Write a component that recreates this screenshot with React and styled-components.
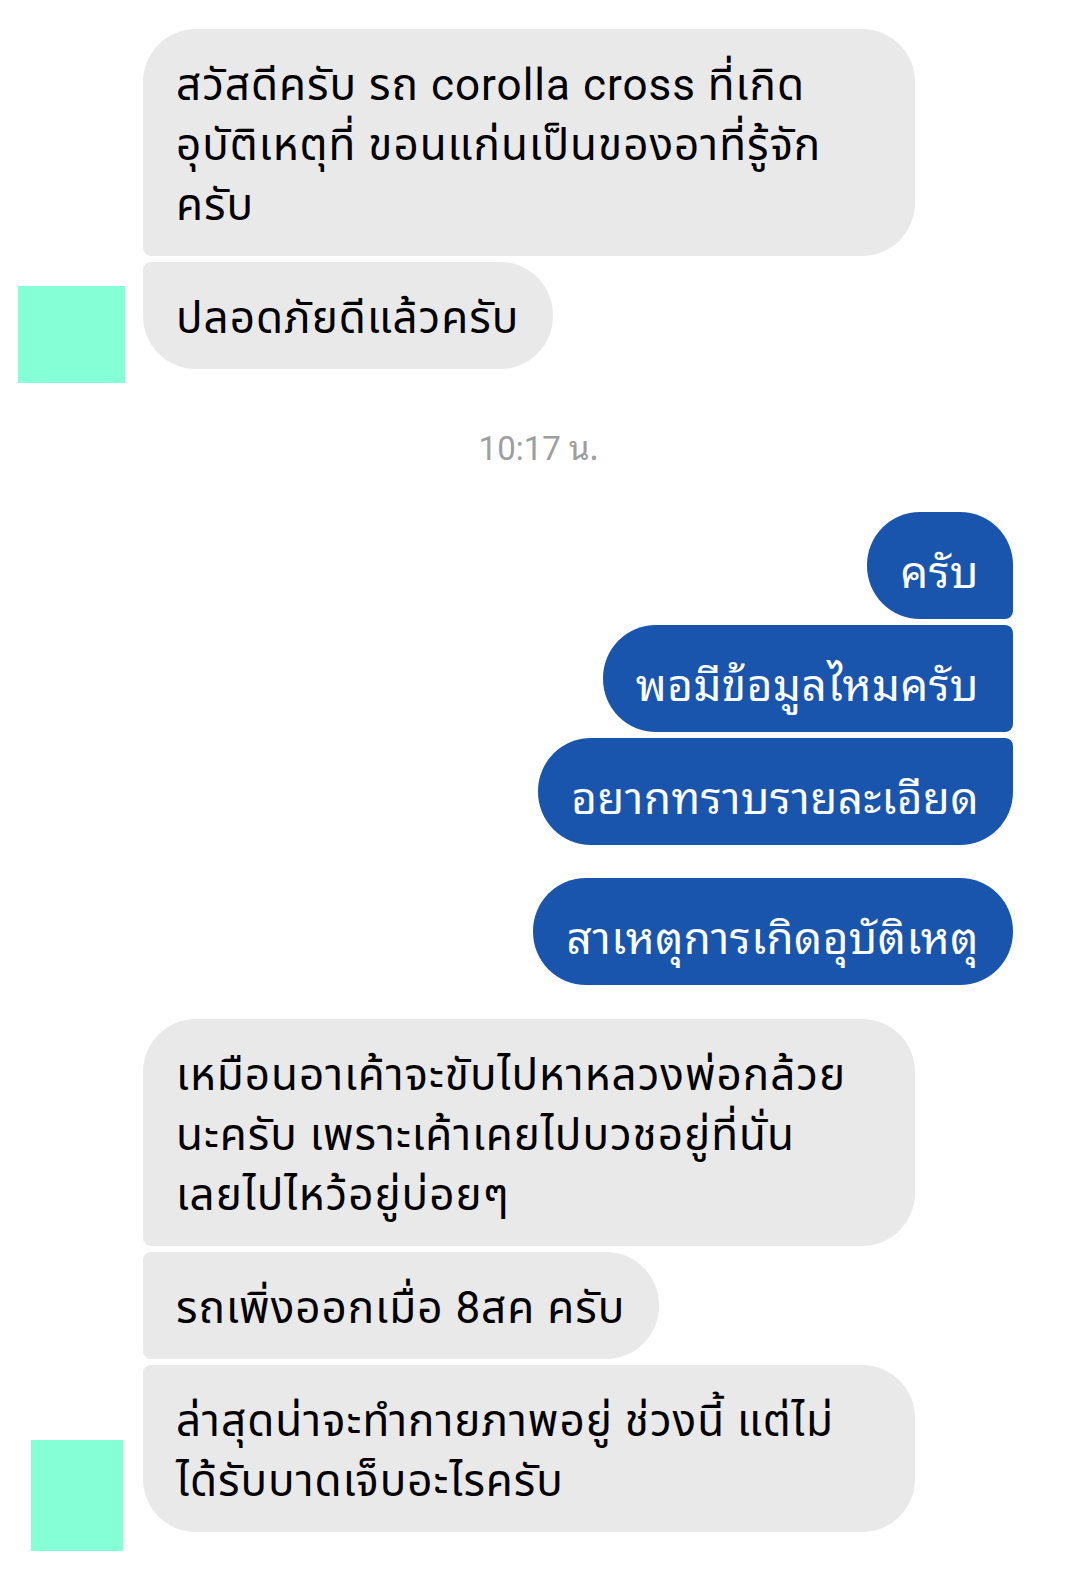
import React from "react";
import styled, { createGlobalStyle } from "styled-components";

const GlobalStyle = createGlobalStyle`
  body {
    margin: 0;
    background: #ffffff;
  }
`;

const BIG = 53;
const SMALL = 8;

const LOOPED =
  '"Noto Sans Thai Looped", "Noto Serif Thai", Loma, Garuda, Norasi, Laksaman, Sarabun, "Tlwg Typo", Roboto, sans-serif';

// radius per corner, depending on where the bubble sits in its group
function corners(pos) {
  if (pos === "single") return [BIG, BIG];
  if (pos === "first") return [BIG, SMALL];
  if (pos === "middle") return [SMALL, SMALL];
  return [SMALL, BIG];
}

function App() {
  return (
    <Thread>
      <GlobalStyle />

      <Group>
        <Row>
          <Side />
          <Bubble $pos="first" $wide>
            สวัสดีครับ รถ corolla cross ที่เกิด
            <br />
            อุบัติเหตุที่ ขอนแก่นเป็นของอาที่รู้จัก
            <br />
            ครับ
          </Bubble>
        </Row>
        <Row>
          <Side>
            <Avatar $left={18} $w={107} $h={97} $drop={14} />
          </Side>
          <Bubble $pos="last">ปลอดภัยดีแล้วครับ</Bubble>
        </Row>
      </Group>

      <Stamp>
        10:17 <ThaiUnit>น.</ThaiUnit>
      </Stamp>

      <Group $out>
        <Bubble $out $pos="first">ครับ</Bubble>
        <Bubble $out $pos="middle">พอมีข้อมูลไหมครับ</Bubble>
        <Bubble $out $pos="last">อยากทราบรายละเอียด</Bubble>
      </Group>

      <Group $out $space={33}>
        <Bubble $out $pos="single">สาเหตุการเกิดอุบัติเหตุ</Bubble>
      </Group>

      <Group $space={34}>
        <Row>
          <Side />
          <Bubble $pos="first" $wide>
            เหมือนอาเค้าจะขับไปหาหลวงพ่อกล้วย
            <br />
            นะครับ เพราะเค้าเคยไปบวชอยู่ที่นั่น
            <br />
            เลยไปไหว้อยู่บ่อยๆ
          </Bubble>
        </Row>
        <Row>
          <Side />
          <Bubble $pos="middle">รถเพิ่งออกเมื่อ 8สค ครับ</Bubble>
        </Row>
        <Row>
          <Side>
            <Avatar $left={31} $w={92} $h={111} $drop={19} />
          </Side>
          <Bubble $pos="last" $wide>
            ล่าสุดน่าจะทำกายภาพอยู่ ช่วงนี้ แต่ไม่
            <br />
            ได้รับบาดเจ็บอะไรครับ
          </Bubble>
        </Row>
      </Group>
    </Thread>
  );
}

export default App;

const Thread = styled.div`
  display: flex;
  flex-direction: column;
  padding: 29px 64px 60px 0;
  font-family: Roboto, "Noto Sans Thai", "Noto Sans", sans-serif;
`;

const Group = styled.div`
  display: flex;
  flex-direction: column;
  align-items: ${(p) => (p.$out ? "flex-end" : "stretch")};
  gap: 6px;
  margin-top: ${(p) => p.$space || 0}px;
`;

const Row = styled.div`
  display: grid;
  grid-template-columns: 143px 1fr;
  align-items: end;
  justify-items: start;
`;

const Side = styled.div`
  display: flex;
  align-items: flex-end;
  height: 100%;
`;

const Avatar = styled.div`
  width: ${(p) => p.$w}px;
  height: ${(p) => p.$h}px;
  margin-left: ${(p) => p.$left}px;
  margin-bottom: -${(p) => p.$drop}px;
  background: #84ffd6;
`;

const Bubble = styled.div`
  box-sizing: border-box;
  width: ${(p) => (p.$wide ? "772px" : "auto")};
  max-width: 772px;
  padding: 26px 34px 21px 33px;
  font-family: ${(p) => (p.$out ? LOOPED : "inherit")};
  font-size: 44px;
  line-height: 60px;
  letter-spacing: ${(p) => (p.$out ? "0.5px" : "1px")};
  white-space: nowrap;
  color: ${(p) => (p.$out ? "#ffffff" : "#000000")};
  background: ${(p) => (p.$out ? "#1a55ad" : "#e9e9e9")};
  border-radius: ${(p) => {
    const [top, bottom] = corners(p.$pos);
    return p.$out
      ? `${BIG}px ${top}px ${bottom}px ${BIG}px`
      : `${top}px ${BIG}px ${BIG}px ${bottom}px`;
  }};
`;

const Stamp = styled.div`
  height: 40px;
  margin: 57px 0 46px 64px;
  text-align: center;
  font-size: 33px;
  line-height: 40px;
  color: #9e9e9e;
`;

const ThaiUnit = styled.span`
  font-family: ${LOOPED};
`;
